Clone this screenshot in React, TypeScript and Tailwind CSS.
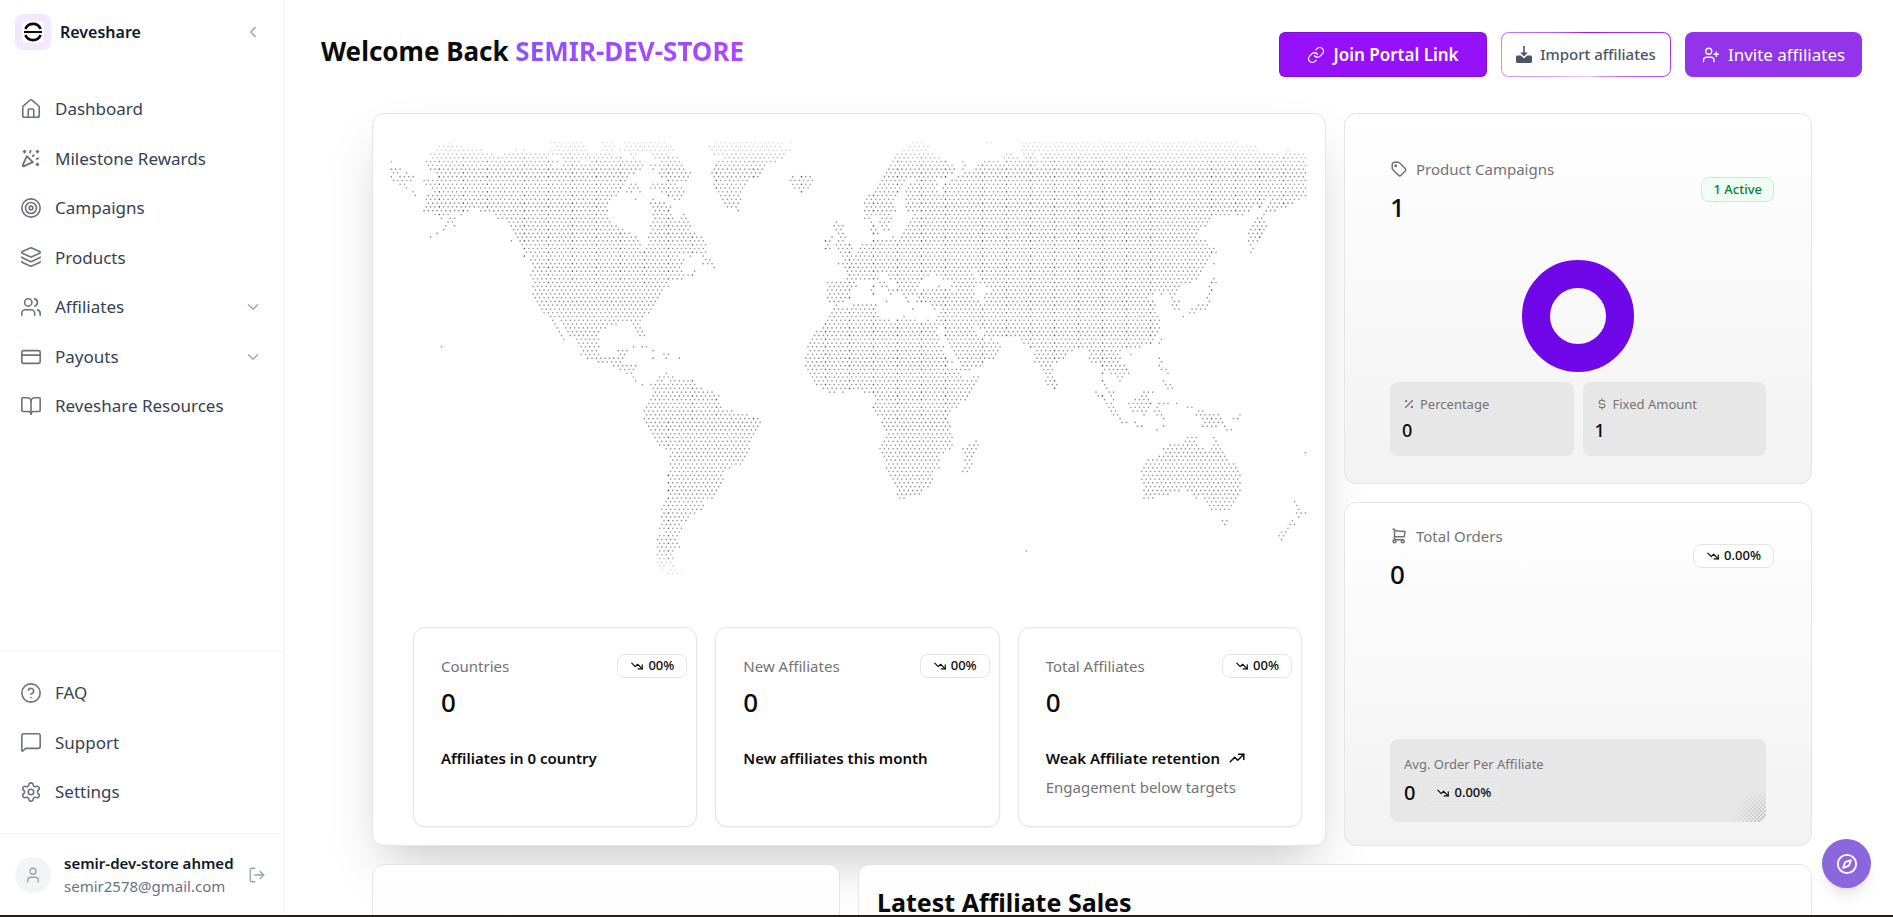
import type { ReactNode } from "react";
import {
  BookOpen,
  ChevronDown,
  ChevronLeft,
  CircleHelp,
  Compass,
  CreditCard,
  House,
  Layers,
  Link,
  LogOut,
  MessageSquare,
  Settings,
  Target,
  User,
  UserPlus,
  Users,
} from "lucide-react";
import {
  TbConfetti,
  TbCurrencyDollar,
  TbPercentage,
  TbShoppingCart,
  TbTag,
  TbTrendingDown,
  TbTrendingUp,
} from "react-icons/tb";
import { clsx } from "clsx";

// Land spans for each row of the dotted world map, north to south.
// "a-b" is a run of dots, a lone number is a single dot.
const WEST = `240 541-635 697-725 760-885 1038-1235 1260
206-275 567-640 702-730 775-905 1020-1225
200-334 437 462 541-650 700-720 755-905 1025-1262
187-370 400-530 541-655 680-720 780-800 845-890 1033-1240
187-530 575-655 675-755 790 850-915 1060-1230
64 167-560 585-630 660-810 870-925 1040-1220
173-545 575-590 605-640 655-815 845-935 1038-1185
64-90 180-810 850 880-940 1033-1180
70-82 108 195-790 875-960 1030-1175
64 90-128 206-775 870-960 1038-1165 1267 1293-1320
70-122 160-170 187-770 890-945 1038-1135 1260-1328
90-103 167-760 780-800 845-920 1035-1130 1265-1320
108 187-750 775-805 840-930 1038-1120 1270-1315
128 200-740 768-782 808 880-935 1045-1112 1293
135 180-738 890 905-930 1048-1105
173-720 795 848 912-925 1055-1105
180-710 840-880 1060-1105
173-710 845-900 1070-1098
160-296 330-715 850-895 1103
195-240 272 375-710 845-905 940
213 240-253 382-710 850-910 930-945
233-247 415-715 845-955
227 253 420-740 845-960
220 428-760 850-955
200 435-780 845-975
180 438-800 838-995
422 450-800 840-1000
455-805 835-1008
460-805 835-1000
465-1005
462 487-920 960 1000
482-935 1000-1018
495-905 920-935 995-1025
490-930 1030
487-935 970
487-935 955-968
487-915 933
493-893
487-890
493-875
487-870
495-863
500-857
506-850
513-845
528-835
540-817
547 573-810
555 580-740 790-803
560 585-705 803-808
567 592-690 803-815
573 600-685 808-822
580 618-685
625-685
213 632-685 790 815-828
640-680 745-770 848
632-685 750-765 880-893
652-760 848 887 926
685-750
730-795
750-790
770-783 887
790 867-907
795 860-873 900-965
815 842-972
848-955 965-992
853-1025
848-1045
842-1040
835-1045
828-1050
822-1085
828-1130
822-1162
828-1168
835-1162
842-1155
848-1150
855-1142
860-1137
867-1130
887-1137
905-1130
900-1123
905-1117
900-1110
907-1078
900-1058
893-1052
900-1058
893-1052
900-1045
893-1037
900-1032
893-1025
887-993
880-1000
873-993
880-973
873-953
880-945
873-927
867-935
887-927
867-920
860-913
867-920
860-927
867-907
860-900
867-907
860-907
867-880 907
873 900-913
893-935`;

const EAST = `187-213 410-423 515-1155
180-235 520-1215
160-230 515-1222 1313
140-250 468-482 520-550 570-1280 1310-1360
135-265 465-507 530-550 575-1365
125-290 337 400-445 465-505 515-1365
118-300 343 380-560 575-1365
115-313 335 375-550 565-1365
105-305 343 360-550 565-1365
100-260 270-290 325-1365
95-165 200-255 305-1365
85-155 187-265 290-1365
82-150 180-255 285-1360
75-140 175-262 285-1365
55-130 170-1365
50-130 165-1245 1265-1345
42-120 173-1240 1260-1330
48-130 165-215 235-1200 1227 1255-1305
42-130 175-200 220-1190 1247-1275
48-120 195 215-1140 1165-1180 1240
42-55 95-125 187-1080 1220-1235
-42 68 95-115 180-1070 1212-1240
-48--20 68 95-115 173-1060 1208-1248
-37--25 62-75 105-115 170-1045 1200-1240
-30--17 68-82 160-1040 1195-1235
-55 -30--15 128 155-1030 1198-1230
-75--60 -37--15 68-95 115-1060 1195-1227
-68 -35-0 35-1070 1203
-75--62 -37-0 30-1090 1207
-30-0 20-1095 1202
-15-0 10-1080
-20-1070
-35-1065 1090
-15-1060
-10-225 245-360 390-1050
-5-80 115-240 260-360 395-1045
-10-75 90 125-215 285-370 400-1035 1090
-70-10 90-100 140-205 310-380 395-1020 1083-1095
-65-15 65 100-115 150-200 265 310-375 415-990 1078
-62-0 62-70 115-125 145-190 215-295 320-365 425-960 970-985 1083
-65--5 68 120 160-195 205-370 415-905 930 958-980 1078
-62--5 165 205-365 410-890 965 1070
-62--15 108 173 200-225 240-380 415-910 975-985 1075
-42 5-80 245-255 270-915 970-980 1045-1075
-50-75 187 250 275-910 970-985 1020-1065
-60-75 270-920 1015-1030
-65-90 160 265-920 997
-70-110 140-195 230 260-930
-75-925
-82-255 285-370 390-925
-95-260 290-375 405-920
-105-255 290-380 405-915
-112-265 295-400 420 515-905 932
-120-265 300-440 520-900 925
-127-280 305-450 540-690 700-870
-122-275 310-440 560-665 715-810
-127-285 320-435 560-650 720-805 840
-127-285 325-430 565-640 722-815 925
-122-300 330-395 560-620 722-805 932
-127-290 335-390 570-600 755-825 925
-122-355 580-605 760-830 932-945
-120-325 585-600 755 780-835 950
-113-330 370-385 590-605 800-815
-108-380 585-612 755 808 938
-103-370 592-618 762 945-960
-83-370 612 768 950-965
-62--48 -23 40-355 737 775-788 880-905
75-350 743-755 782 872-885
80-345 762 788 852-893
75-325 768-782 833-900 925-950 978
70-320 775-790 840-895 918 1010-1025
75-300 782-795 848-890 912-925 1043-1057
82-290 788-800 880 918-932 1038-1100 1168
100-290 808 938 1057-1110 1147-1160
95-290 815-828 855 1063-1115
103-297 862-873 938 1057-1095 1122
107-293 920 1128-1142
113-300
107-305 1010-1037 1090
100-300 377 1005-1030 1095
95-305 357-383 958-1040 1090-1102
88-300 337-378 938-1057 1083-1108
95-280 343-372 945-1115 1365
100-260 350-365 925-1122
107-265 343-360 893-1130
113-260 350-363 886-1150
107-265 343-357 880-1155
113-245 337-350 873-1160
120-245 880-1168
127-245 873-1168
133-240 880-1168
140-233 886-1160
147-213 880-985 1010-1168
140-207 887-953 1030-1160
147-160 880-905 1037 1063-1160
1070-1150 1332
1077-1142 1338
1083-1137 1345
1338-1365
1345
1115-1128 1325
1122 1318-1332
1312
1292-1305
1285-1300
1292


527`;

// Meridians whose dots are drawn darker
const MERIDIANS = [
  206, 278, 350, 462, 534, 606, 678, 750, 822, 894, 966, 1038, 1149, 1293, 1365, 1437, 1508, 1580, 1652, 1724,
  1836, 1908, 1980, 2051, 2123, 2195, 2267, 2339, 2523, 2595, 2667, 2739,
];

const STEP_X = 13.09;
const STEP_Y = 11.34;

function isStrong(x: number, y: number) {
  if (!MERIDIANS.some((m) => Math.abs(m - x) < 3.2)) return false;
  if (x < 900 && x > 880 && y > 930) return true;
  if (x < 930) return y > 135 && y < 525;
  return y > 135 && y < 930;
}

function plot(rows: string, originX: number) {
  let base = "";
  let strong = "";
  rows.split("\n").forEach((row, r) => {
    const y = 98 + r * STEP_Y;
    // every second row is shifted by half a step
    const x0 = r % 2 ? 64 : 64 + STEP_X / 2;
    for (const m of row.matchAll(/(-?\d+)(?:-(-?\d+))?/g)) {
      const from = Math.round((originX + Number(m[1]) - x0) / STEP_X);
      const to = Math.round((originX + Number(m[2] ?? m[1]) - x0) / STEP_X);
      for (let c = from; c <= to; c++) {
        const x = x0 + c * STEP_X;
        const dot = `M${x.toFixed(1)} ${y.toFixed(1)}h0`;
        if (isStrong(x, y)) strong += dot;
        else base += dot;
      }
    }
  });
  return { base, strong };
}

const west = plot(WEST, 0);
const east = plot(EAST, 1440);

function WorldMap() {
  return (
    <svg
      viewBox="57 54 2754 1376"
      role="img"
      aria-label="World map"
      className="w-full [mask-image:linear-gradient(to_bottom,transparent,white_10%,white_90%,transparent)]"
    >
      <g fill="none" stroke="#000" strokeLinecap="round">
        <path d={west.base + east.base} strokeOpacity="0.42" strokeWidth="5" />
        <path d={west.strong + east.strong} strokeOpacity="0.66" strokeWidth="5" />
      </g>
    </svg>
  );
}

interface NavItem {
  label: string;
  icon: ReactNode;
  expandable?: boolean;
}

const mainNav: NavItem[] = [
  { label: "Dashboard", icon: <House size={22} strokeWidth={1.75} /> },
  { label: "Milestone Rewards", icon: <TbConfetti size={22} strokeWidth={2} /> },
  { label: "Campaigns", icon: <Target size={22} strokeWidth={1.75} /> },
  { label: "Products", icon: <Layers size={22} strokeWidth={1.75} /> },
  { label: "Affiliates", icon: <Users size={22} strokeWidth={1.75} />, expandable: true },
  { label: "Payouts", icon: <CreditCard size={22} strokeWidth={1.75} />, expandable: true },
  { label: "Reveshare Resources", icon: <BookOpen size={22} strokeWidth={1.75} /> },
];

const helpNav: NavItem[] = [
  { label: "FAQ", icon: <CircleHelp size={22} strokeWidth={1.75} /> },
  { label: "Support", icon: <MessageSquare size={22} strokeWidth={1.75} /> },
  { label: "Settings", icon: <Settings size={22} strokeWidth={1.75} /> },
];

function NavList({ items, className }: { items: NavItem[]; className: string }) {
  return (
    <ul className={clsx("grid auto-rows-fr", className)}>
      {items.map((item) => (
        <li key={item.label}>
          <a href="#" className="flex h-full items-center gap-[13px] pl-5 pr-[22px] text-[17px] text-gray-700">
            <span className="text-gray-500">{item.icon}</span>
            <span className="flex-1">{item.label}</span>
            {item.expandable && <ChevronDown size={18} strokeWidth={1.75} className="text-gray-400" />}
          </a>
        </li>
      ))}
    </ul>
  );
}

function Sidebar() {
  return (
    <aside className="flex w-[285px] shrink-0 flex-col border-r border-gray-100 bg-white">
      <div className="flex items-center pt-3.5 pl-[15px] pr-[22px]">
        <span className="flex size-9 items-center justify-center rounded-lg bg-purple-100">
          <svg viewBox="0 0 22 22" className="size-[22px]">
            <rect width="22" height="22" rx="5" fill="#fff" />
            <path d="M3.4 8a8.2 8.2 0 0 1 15.2 0" fill="none" stroke="#0a0a0a" strokeWidth="2.6" />
            <path d="M3.4 14a8.2 8.2 0 0 0 15.2 0" fill="none" stroke="#0a0a0a" strokeWidth="2.6" />
            <path d="M2 11h18" stroke="#0a0a0a" strokeWidth="2" />
          </svg>
        </span>
        <span className="ml-[9px] flex-1 text-base font-semibold text-gray-900">Reveshare</span>
        <button type="button" aria-label="Collapse sidebar" className="text-gray-400">
          <ChevronLeft size={18} strokeWidth={1.75} />
        </button>
      </div>

      <nav className="flex flex-1 flex-col justify-between">
        <NavList items={mainNav} className="mt-[34px] h-[347px]" />
        <div className="border-t border-gray-100 py-4">
          <NavList items={helpNav} className="h-[149px]" />
        </div>
      </nav>

      <div className="flex h-[82px] items-center border-t border-gray-100 pl-[15px] pr-[18px]">
        <span className="flex size-9 items-center justify-center rounded-full bg-gray-100 text-gray-400">
          <User size={18} strokeWidth={1.75} />
        </span>
        <div className="ml-[13px] flex-1 whitespace-nowrap">
          <p className="text-[15px] leading-[23px] font-semibold text-gray-900">semir-dev-store ahmed</p>
          <p className="text-[15px] leading-[23px] text-gray-500">semir2578@gmail.com</p>
        </div>
        <button type="button" aria-label="Log out" className="text-gray-400">
          <LogOut size={18} strokeWidth={1.75} />
        </button>
      </div>
    </aside>
  );
}

function TrendBadge({ value, className }: { value: string; className?: string }) {
  return (
    <span
      className={clsx(
        "flex h-6 items-center gap-1 rounded-lg border px-3 text-[13px] font-medium text-neutral-950",
        className
      )}
    >
      <TbTrendingDown size={14} />
      {value}
    </span>
  );
}

interface StatCardProps {
  label: string;
  value: number;
  title: string;
  note?: string;
}

function StatCard({ label, value, title, note }: StatCardProps) {
  return (
    <div className="h-[200px] rounded-xl border border-neutral-200 bg-white pt-[26px] pr-[9px] pl-[27px] shadow-xs">
      <div className="flex items-center justify-between">
        <p className="text-[15px] leading-6 text-neutral-500">{label}</p>
        <TrendBadge value="00%" className="border-neutral-200" />
      </div>
      <p className="mt-1 text-[26px] leading-10 font-medium text-neutral-950">{value}</p>
      <p className="mt-[22px] flex items-center gap-2 text-[15px] leading-7 font-semibold text-neutral-950">
        {title}
        {note && <TbTrendingUp size={18} />}
      </p>
      {note && <p className="text-[15px] leading-[30px] text-neutral-500">{note}</p>}
    </div>
  );
}

const panel = "rounded-xl border border-neutral-200 bg-linear-to-b from-white to-[#f2f2f2]";

function CampaignsCard() {
  return (
    <section className={clsx(panel, "h-[371px] px-[45px] pt-[43px]")}>
      <div className="flex justify-between">
        <div>
          <h2 className="flex items-center gap-2 text-[15px] leading-6 text-neutral-500">
            <TbTag size={18} />
            Product Campaigns
          </h2>
          <p className="mt-1.5 text-[26px] leading-10 font-medium text-neutral-950">1</p>
        </div>
        <span className="mt-5 -mr-2 flex h-[25px] items-center self-start rounded-lg border border-green-200 bg-green-50 px-[11px] text-[13px] font-medium text-green-700">
          1 Active
        </span>
      </div>
      <svg viewBox="0 0 114 114" role="img" aria-label="Campaign types" className="mx-auto mt-8 size-[114px]">
        <circle cx="57" cy="57" r="42" fill="none" stroke="#6f07e8" strokeWidth="28" />
      </svg>
      <div className="mt-[9px] grid grid-cols-2 gap-[9px]">
        <div className="h-[74px] rounded-lg bg-[#e7e7e7] px-3 pt-2.5">
          <p className="flex items-center gap-1 text-[13px] leading-6 text-neutral-500">
            <TbPercentage size={14} />
            Percentage
          </p>
          <p className="text-lg font-medium text-neutral-950">0</p>
        </div>
        <div className="h-[74px] rounded-lg bg-[#e7e7e7] px-3 pt-2.5">
          <p className="flex items-center gap-1 text-[13px] leading-6 text-neutral-500">
            <TbCurrencyDollar size={14} />
            Fixed Amount
          </p>
          <p className="text-lg font-medium text-neutral-950">1</p>
        </div>
      </div>
    </section>
  );
}

function OrdersCard() {
  return (
    <section className={clsx(panel, "flex flex-1 flex-col justify-between px-[45px] pt-[21px] pb-[23px]")}>
      <div className="flex justify-between">
        <div>
          <h2 className="flex items-center gap-2 text-[15px] leading-6 text-neutral-500">
            <TbShoppingCart size={18} />
            Total Orders
          </h2>
          <p className="mt-1.5 text-[26px] leading-10 font-medium text-neutral-950">0</p>
        </div>
        <TrendBadge value="0.00%" className="mt-5 -mr-2 border-neutral-200 bg-white" />
      </div>
      <div className="relative h-[83px] overflow-hidden rounded-lg bg-[#e7e7e7] px-3.5 pt-[13px]">
        <p className="text-[13px] leading-6 text-neutral-500">Avg. Order Per Affiliate</p>
        <div className="mt-[3px] flex items-center gap-2">
          <span className="text-xl font-medium text-neutral-950">0</span>
          <TrendBadge value="0.00%" className="border-black/2" />
        </div>
        <div className="absolute right-0 bottom-0 size-9 bg-[repeating-conic-gradient(#bdbdbd_0_25%,transparent_0_50%)] bg-[length:4px_4px] [mask-image:radial-gradient(circle_at_bottom_right,black,transparent_34px)]" />
      </div>
    </section>
  );
}

function Header() {
  return (
    <header className="flex items-start justify-between pt-8 pr-[31px] pl-9">
      <h1 className="text-[26px] leading-[38px] font-bold text-neutral-950">
        Welcome Back{" "}
        <span className="bg-linear-to-r from-violet-500 to-purple-500 bg-clip-text text-transparent">
          SEMIR-DEV-STORE
        </span>
      </h1>
      <div className="flex gap-3.5">
        <button
          type="button"
          className="flex h-[45px] w-[208px] items-center justify-center gap-2 rounded-md border border-[#6e11b0]/60 bg-[#9610fb] text-[17px] font-semibold text-white"
        >
          <Link size={18} strokeWidth={1.75} />
          Join Portal Link
        </button>
        <button
          type="button"
          className="flex h-[45px] w-[170px] rounded-lg bg-[conic-gradient(from_180deg,#ead5ff,#c889ff_25%,#9810fa_50%,#a335ff_75%,#ead5ff)] p-px text-[15px] font-medium text-gray-600"
        >
          <span className="flex size-full items-center justify-center gap-2 rounded-[7px] bg-white">
            <svg viewBox="0 0 16 18" className="h-[18px] w-4" fill="currentColor">
              <path d="M7.2 0h1.6v6.5h3L8 10.5l-3.8-4h3z" />
              <path d="M1.5 9.500h3.3L8 12.6l3.2-3.1h3.3c.8 0 1.5.7 1.5 1.5v4.5c0 .8-.7 1.5-1.5 1.5h-13C.7 17 0 16.3 0 15.5V11c0-.8.7-1.5 1.5-1.5z" />
            </svg>
            Import affiliates
          </span>
        </button>
        <button
          type="button"
          className="flex h-[45px] w-[177px] items-center justify-center gap-2 rounded-lg bg-[#9333ea] text-[17px] text-white"
        >
          <UserPlus size={18} strokeWidth={1.75} />
          Invite affiliates
        </button>
      </div>
    </header>
  );
}

export default function App() {
  return (
    <div className="flex h-screen overflow-hidden border-b-2 border-[#2a1f10] bg-white font-['Noto_Sans',sans-serif]">
      <Sidebar />
      <main className="min-w-0 flex-1">
        <Header />
        <div className="mt-9 grid grid-cols-3 gap-[18px] pr-[81px] pl-[87px]">
          <section className="col-span-2 rounded-xl border border-neutral-200 bg-white pt-3.5 pb-[18px] shadow-[0_25px_50px_-12px_rgba(0,0,0,0.22)]">
            <div className="pr-[18px] pl-4">
              <WorldMap />
            </div>
            <div className="mt-10 grid grid-cols-3 gap-[18px] pr-[23px] pl-10">
              <StatCard label="Countries" value={0} title="Affiliates in 0 country" />
              <StatCard label="New Affiliates" value={0} title="New affiliates this month" />
              <StatCard
                label="Total Affiliates"
                value={0}
                title="Weak Affiliate retention"
                note="Engagement below targets"
              />
            </div>
          </section>

          <div className="flex flex-col gap-[18px]">
            <CampaignsCard />
            <OrdersCard />
          </div>

          <section className={clsx(panel, "relative h-[340px]")} />
          <section className={clsx(panel, "relative col-span-2 h-[340px] px-[18px] pt-[18px]")}>
            <h2 className="text-[25px] leading-[38px] font-bold text-neutral-950">Latest Affiliate Sales</h2>
          </section>
        </div>
      </main>

      <button
        type="button"
        aria-label="Open guide"
        className="fixed right-[22px] bottom-[29px] flex size-[49px] items-center justify-center rounded-full bg-[#8c66dc] text-white shadow-lg"
      >
        <Compass size={22} />
      </button>
    </div>
  );
}
